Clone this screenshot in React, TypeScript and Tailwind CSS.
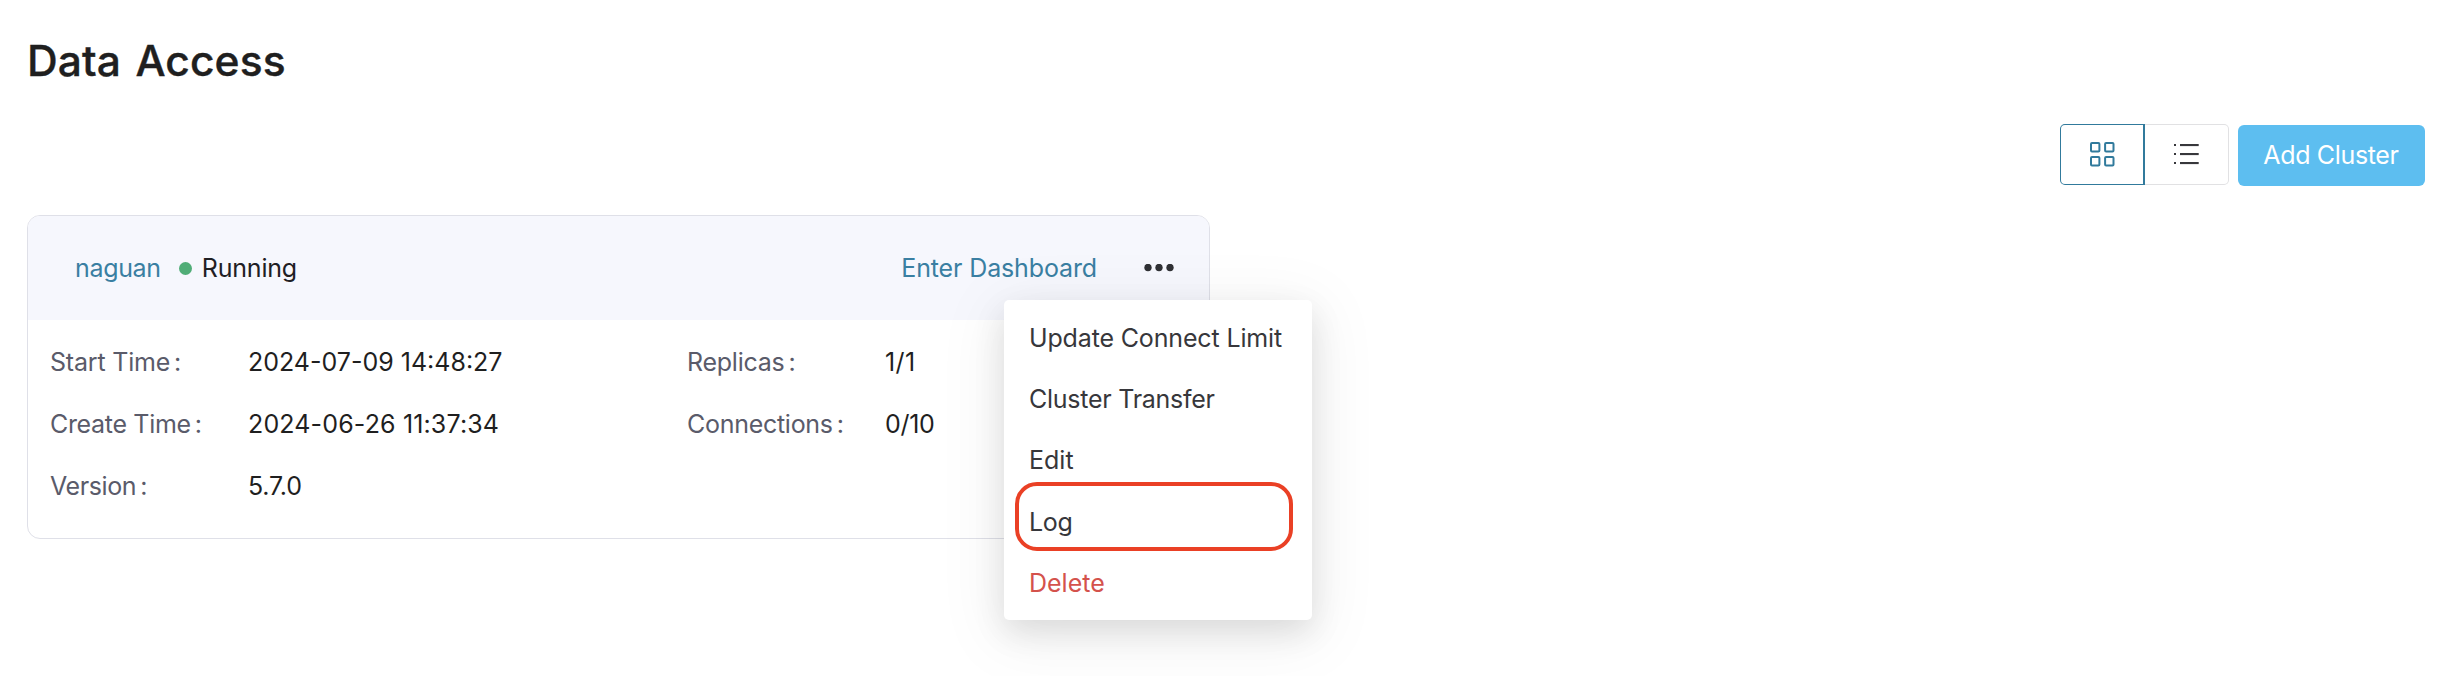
type Field = { label: string; value: string; labelClass: string; valueClass: string };

const leftFields: Field[] = [
  { label: "Start Time", value: "2024-07-09 14:48:27", labelClass: "tracking-[-0.2px]", valueClass: "" },
  { label: "Create Time", value: "2024-06-26 11:37:34", labelClass: "tracking-[-0.33px]", valueClass: "tracking-[0.15px]" },
  { label: "Version", value: "5.7.0", labelClass: "tracking-[-0.4px]", valueClass: "tracking-[-0.2px]" },
];

const rightFields: Field[] = [
  { label: "Replicas", value: "1/1", labelClass: "tracking-[-0.25px]", valueClass: "tracking-[0.4px]" },
  { label: "Connections", value: "0/10", labelClass: "tracking-[-0.28px]", valueClass: "tracking-[-0.3px]" },
];

const menuItems = [
  { label: "Update Connect Limit", className: "text-[#37373b] tracking-[-0.15px]" },
  { label: "Cluster Transfer", className: "text-[#37373b] tracking-[-0.26px]" },
  { label: "Edit", className: "text-[#37373b]" },
  { label: "Log", className: "text-[#37373b] tracking-[-0.3px]", marked: true },
  { label: "Delete", className: "text-[#d4524c]" },
];

function FieldColumn({ fields }: { fields: Field[] }) {
  return (
    <dl className="w-[637px] shrink-0">
      {fields.map((f) => (
        <div key={f.label} className="flex h-[62px] items-center">
          <dt className="flex w-[198px] text-[#5a5b6a]">
            <span className={f.labelClass}>{f.label}</span>
            <span className="ml-[4px]">:</span>
          </dt>
          <dd className={`text-[#1f1f1f] ${f.valueClass}`}>{f.value}</dd>
        </div>
      ))}
    </dl>
  );
}

function GridIcon() {
  return (
    <svg className="-mt-px overflow-visible" width="24" height="24" viewBox="0 0 24 24" fill="none" stroke="#317a9c" strokeWidth="2">
      <rect x="1" y="1" width="8.4" height="8.4" rx="1" />
      <rect x="15.1" y="1" width="8.4" height="8.4" rx="1" />
      <rect x="1" y="15.1" width="8.4" height="8.4" rx="1" />
      <rect x="15.1" y="15.1" width="8.4" height="8.4" rx="1" />
    </svg>
  );
}

function ListIcon() {
  return (
    <svg className="-mt-px" width="25" height="22" viewBox="0 0 25 22" fill="#37373b">
      {[1, 10, 19].map((y) => (
        <g key={y}>
          <rect x="0" y={y} width="2" height="2" />
          <rect x="6" y={y} width="18.7" height="2.1" />
        </g>
      ))}
    </svg>
  );
}

function ActionMenu() {
  return (
    <ul className="absolute top-[84px] left-[976px] z-10 h-80 w-[308px] rounded-[5px] bg-white pt-[7px] shadow-[0_12px_32px_rgba(0,0,0,0.11),0_12px_64px_12px_rgba(0,0,0,0.05)]">
      {menuItems.map((item) => (
        <li key={item.label} className={`relative flex h-[61.33px] items-center pl-[25px] ${item.className}`}>
          {item.label}
          {item.marked && (
            <span className="absolute top-[-9px] left-[11px] h-[69px] w-[278px] rounded-[22px] border-4 border-[#ea4025]" />
          )}
        </li>
      ))}
    </ul>
  );
}

export default function App() {
  return (
    <main className="h-[676px] overflow-hidden bg-white pl-[27px] font-['Inter',sans-serif] text-[25px] leading-[30px] whitespace-nowrap">
      <h1 className="pt-[35px] text-[42.5px] leading-[51px] font-medium tracking-[0.1px] text-[#1f1f1f] [word-spacing:3px] [-webkit-text-stroke:0.4px_#1f1f1f]">
        Data Access
      </h1>

      <div className="mt-[38px] flex justify-end pr-[27px]">
        <div className="flex h-[61px]">
          <button className="flex w-[85px] items-center justify-center rounded-l-[5px] border border-r-2 border-[#317a9c]">
            <GridIcon />
          </button>
          <button className="flex w-[84px] items-center justify-center rounded-r-[5px] border border-l-0 border-[#e1e1e3]">
            <ListIcon />
          </button>
        </div>
        <button className="mt-px ml-[9px] h-[61px] w-[187px] rounded-[6px] bg-[#5dbef0] pr-px pb-px tracking-[-0.35px] text-white">
          Add Cluster
        </button>
      </div>

      <section className="relative mt-[29px] h-[324px] w-[1183px] rounded-[13px] border border-[#dfe0e8]">
        <header className="flex h-[104px] items-center rounded-t-[12px] bg-[#f6f7fd] pl-[47px]">
          <a className="tracking-[-0.33px] text-[#3a7fa2]">naguan</a>
          <span className="ml-[18px] h-[13px] w-[13px] rounded-full bg-[#50ad77]" />
          <span className="ml-[10px] tracking-[-0.2px] text-[#1f2024]">Running</span>
          <a className="ml-auto tracking-[-0.13px] text-[#3a7fa2]">Enter Dashboard</a>
          <button className="mr-[35px] ml-[47px]">
            <svg width="30" height="8" viewBox="0 0 30 8" fill="#303135">
              <circle cx="4" cy="3.5" r="3.7" />
              <circle cx="15" cy="3.5" r="3.7" />
              <circle cx="26" cy="3.5" r="3.7" />
            </svg>
          </button>
        </header>
        <div className="flex pt-[11px] pl-[22px]">
          <FieldColumn fields={leftFields} />
          <FieldColumn fields={rightFields} />
        </div>
        <ActionMenu />
      </section>
    </main>
  );
}
